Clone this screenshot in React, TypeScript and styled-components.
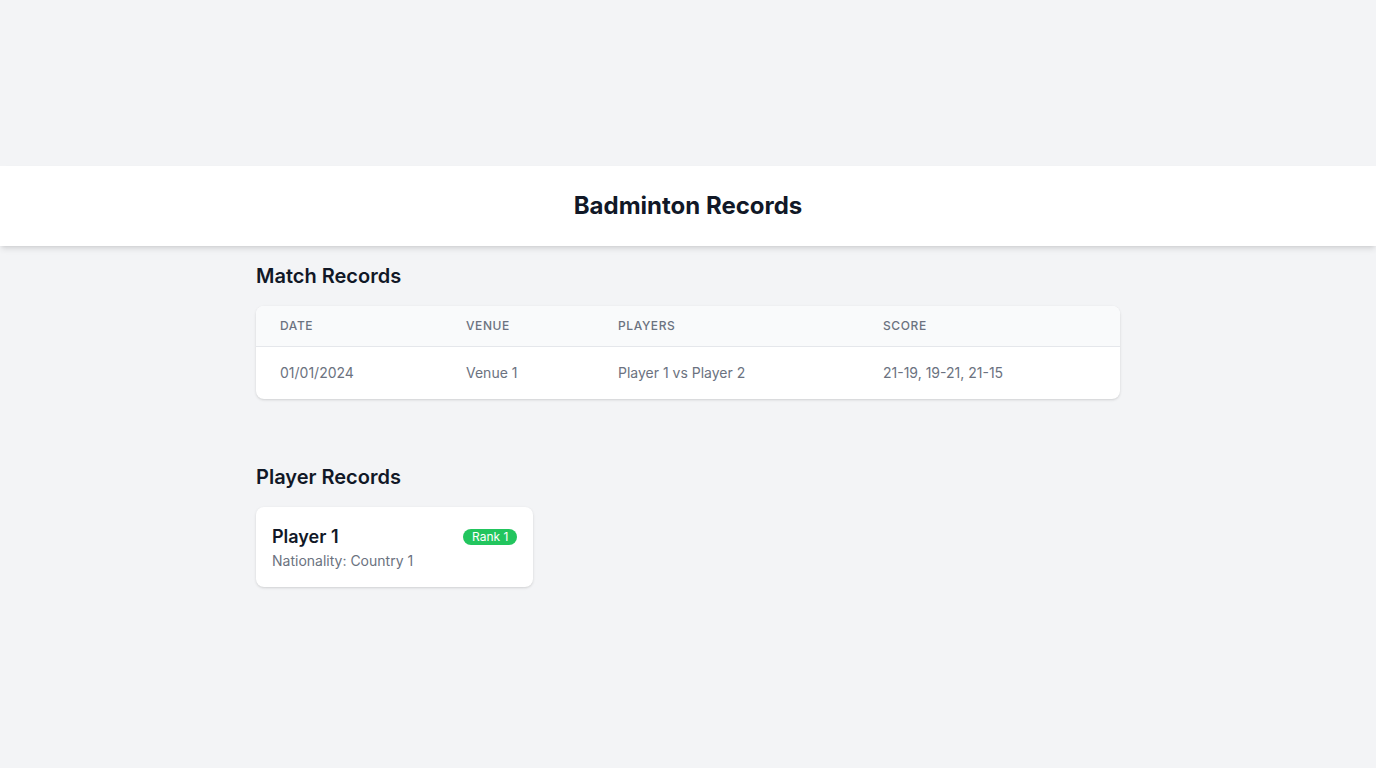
import React from "react";
import styled, { createGlobalStyle } from "styled-components";

const GlobalStyle = createGlobalStyle`
  html, body { margin: 0; padding: 0; }
  body {
    background: #f3f4f6;
    font-family: Inter, "Noto Sans", "Liberation Sans", sans-serif;
    color: #111827;
    -webkit-font-smoothing: antialiased;
  }
  * { box-sizing: border-box; }
`;

const Page = styled.div`
  min-height: 768px;
  padding-top: 166px;
`;

const Header = styled.header`
  background: #ffffff;
  height: 80px;
  display: flex;
  align-items: center;
  justify-content: center;
  box-shadow: 0 4px 6px -1px rgba(0, 0, 0, 0.1), 0 2px 4px -2px rgba(0, 0, 0, 0.1);
`;

const Title = styled.h1`
  margin: 0;
  font-size: 24px;
  line-height: 32px;
  font-weight: 700;
  color: #111827;
`;

const Main = styled.main`
  max-width: 896px;
  margin: 0 auto;
  padding: 16px 16px 0;
`;

const Section = styled.section<{ $gapAfter?: number }>`
  margin-bottom: ${(p) => p.$gapAfter ?? 0}px;
`;

const SectionTitle = styled.h2`
  margin: 0 0 16px;
  font-size: 20px;
  line-height: 28px;
  font-weight: 600;
  color: #111827;
`;

const Card = styled.div`
  background: #ffffff;
  border-radius: 8px;
  box-shadow: 0 1px 3px 0 rgba(0, 0, 0, 0.12), 0 1px 2px -1px rgba(0, 0, 0, 0.1);
  overflow: hidden;
`;

const Table = styled.table`
  width: 100%;
  border-collapse: collapse;
  table-layout: fixed;
`;

const HeadRow = styled.tr`
  background: #f9fafb;
  border-bottom: 1px solid #e5e7eb;
`;

const Th = styled.th<{ $w?: number }>`
  ${(p) => (p.$w ? `width: ${p.$w}px;` : "")}
  padding: 12px 24px;
  text-align: left;
  font-size: 12px;
  line-height: 16px;
  font-weight: 500;
  letter-spacing: 0.05em;
  text-transform: uppercase;
  color: #6b7280;
`;

const Td = styled.td`
  padding: 16px 24px;
  font-size: 14px;
  line-height: 20px;
  color: #6b7280;
  white-space: nowrap;
`;

const Grid = styled.div`
  display: grid;
  grid-template-columns: repeat(3, 1fr);
  gap: 16px;
`;

const PlayerCard = styled.div`
  background: #ffffff;
  border-radius: 8px;
  box-shadow: 0 1px 3px 0 rgba(0, 0, 0, 0.12), 0 1px 2px -1px rgba(0, 0, 0, 0.1);
  padding: 16px;
`;

const PlayerTop = styled.div`
  display: flex;
  align-items: center;
  justify-content: space-between;
`;

const PlayerName = styled.h3`
  margin: 0;
  font-size: 18px;
  line-height: 28px;
  font-weight: 600;
  color: #111827;
`;

const Badge = styled.span`
  background: #22c55e;
  color: #ffffff;
  font-size: 12px;
  line-height: 16px;
  padding: 0 9px;
  border-radius: 9999px;
`;

const Meta = styled.p`
  margin: 0;
  font-size: 14px;
  line-height: 20px;
  color: #6b7280;
`;

const matches = [
  { date: "01/01/2024", venue: "Venue 1", players: "Player 1 vs Player 2", score: "21-19, 19-21, 21-15" },
];

const players = [{ name: "Player 1", rank: 1, nationality: "Country 1" }];

export default function App() {
  return (
    <>
      <GlobalStyle />
      <Page>
        <Header>
          <Title>Badminton Records</Title>
        </Header>
        <Main>
          <Section $gapAfter={64}>
            <SectionTitle>Match Records</SectionTitle>
            <Card>
              <Table>
                <thead>
                  <HeadRow>
                    <Th $w={186}>Date</Th>
                    <Th $w={152}>Venue</Th>
                    <Th $w={265}>Players</Th>
                    <Th>Score</Th>
                  </HeadRow>
                </thead>
                <tbody>
                  {matches.map((m, i) => (
                    <tr key={i}>
                      <Td>{m.date}</Td>
                      <Td>{m.venue}</Td>
                      <Td>{m.players}</Td>
                      <Td>{m.score}</Td>
                    </tr>
                  ))}
                </tbody>
              </Table>
            </Card>
          </Section>
          <Section>
            <SectionTitle>Player Records</SectionTitle>
            <Grid>
              {players.map((p) => (
                <PlayerCard key={p.name}>
                  <PlayerTop>
                    <PlayerName>{p.name}</PlayerName>
                    <Badge>Rank {p.rank}</Badge>
                  </PlayerTop>
                  <Meta>Nationality: {p.nationality}</Meta>
                </PlayerCard>
              ))}
            </Grid>
          </Section>
        </Main>
      </Page>
    </>
  );
}
